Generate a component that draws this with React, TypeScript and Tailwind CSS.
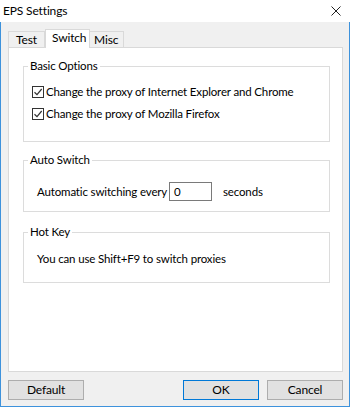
import React from "react";

const font = { fontFamily: 'Lato, "Segoe UI", sans-serif' };

function Check({ label }: { label: string }) {
  return (
    <div className="flex items-center h-[22px]">
      <span className="w-[12px] h-[12px] border border-[#333] bg-white flex items-center justify-center shrink-0">
        <svg width="10" height="10" viewBox="0 0 10 10">
          <path d="M1.5 5.2 L4 7.6 L8.7 2" fill="none" stroke="#333" strokeWidth="1.2" />
        </svg>
      </span>
      <span className="ml-[2px] text-black leading-none whitespace-nowrap">{label}</span>
    </div>
  );
}

function Group({ title, className, children }: { title: string; className: string; children: React.ReactNode }) {
  return (
    <div className={"relative border border-[#dcdcdc] " + className}>
      <span className="absolute -top-[9px] left-[4px] bg-white px-[2px] leading-[16px] text-black">{title}</span>
      {children}
    </div>
  );
}

function Btn({ label, primary }: { label: string; primary?: boolean }) {
  return (
    <div
      className={
        "w-[76px] h-[20px] flex items-center justify-center text-black bg-[#e1e1e1] border " +
        (primary ? "border-[#0078d7]" : "border-[#adadad]")
      }
    >
      {label}
    </div>
  );
}

export default function App() {
  return (
    <div className="w-[350px] h-[407px] flex flex-col bg-white text-[11.5px] tracking-[-0.15px]" style={font}>
      <div className="h-[22px] bg-white flex items-center justify-between pl-[3px] pr-[9px]">
        <span className="text-[12px] text-black">EPS Settings</span>
        <svg width="10" height="10" viewBox="0 0 10 10">
          <path d="M0.5 0.5 L9.5 9.5 M9.5 0.5 L0.5 9.5" stroke="#222" strokeWidth="1" />
        </svg>
      </div>
      <div className="flex-1 bg-[#f0f0f0] border-x border-b border-[#3d92dc] flex flex-col pl-[6px] pr-[6px]">
        <div className="flex items-end mt-[7px] h-[18px] pl-[1px] relative z-10 text-[12px]">
          <div className="w-[37px] h-[16px] border border-b-0 border-[#d9d9d9] bg-[#f0f0f0] flex items-center pl-[7px] text-black">Test</div>
          <div className="w-[45px] h-[19px] -mb-[1px] border border-b-0 border-[#d9d9d9] bg-white flex items-center pl-[6px] pb-[2px] text-black">Switch</div>
          <div className="w-[34px] h-[16px] border border-b-0 border-l-0 border-[#d9d9d9] bg-[#f0f0f0] flex items-center pl-[4px] text-black">Misc</div>
        </div>
        <div className="h-[325px] ml-[1px] w-[335px] border border-[#d9d9d9] bg-white flex flex-col pl-[14px] pr-[12px]">
          <Group title="Basic Options" className="mt-[18px] h-[76px] pl-[8px] pt-[14px]">
            <Check label="Change the proxy of Internet Explorer and Chrome" />
            <Check label="Change the proxy of Mozilla Firefox" />
          </Group>
          <Group title="Auto Switch" className="mt-[18px] h-[52px] pl-[13px] pt-[21px]">
            <div className="flex items-center text-black">
              <span className="w-[132px] whitespace-nowrap">Automatic switching every</span>
              <div className="w-[43px] h-[19px] border border-[#7a7a7a] flex items-center pl-[4px]">0</div>
              <span className="ml-[11px]">seconds</span>
            </div>
          </Group>
          <Group title="Hot Key" className="mt-[20px] h-[51px] pl-[13px] pt-[18px]">
            <div className="text-black leading-[16px]">You can use Shift+F9 to switch proxies</div>
          </Group>
        </div>
        <div className="flex mt-[8px] pl-[1px] text-[12px]">
          <Btn label="Default" />
          <div className="ml-auto flex gap-[8px] mr-[0px]">
            <Btn label="OK" primary />
            <Btn label="Cancel" />
          </div>
        </div>
      </div>
    </div>
  );
}
